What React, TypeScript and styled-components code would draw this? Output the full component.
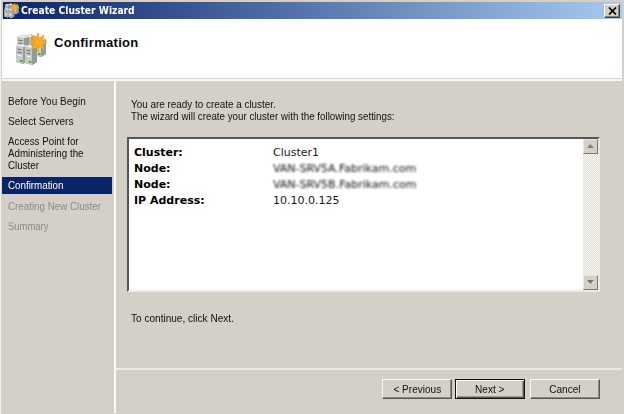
import React from "react";
import styled, { createGlobalStyle } from "styled-components";

const Global = createGlobalStyle`
  *, *::before, *::after { box-sizing: border-box; }
  body { margin: 0; background: #d4d0c8; overflow: hidden; }
`;

const Window = styled.main`
  width: 624px;
  height: 414px;
  display: flex;
  flex-direction: column;
  background: #d4d0c8;
  border-left: 1px solid #f4f3f0;
  padding: 2px 2px 1px 1px;
  font: 11.5px/12px "Liberation Sans", Arial, sans-serif;
  color: #101010;
`;

const TitleBar = styled.header`
  height: 17px;
  flex: none;
  display: flex;
  align-items: center;
  margin-left: 1px;
  padding: 0 2px 0 1px;
  background: linear-gradient(90deg, #0a246a, #a6caf0);
`;

const Scaled = styled.span<{ $x?: number }>`
  display: block;
  width: max-content;
  white-space: pre;
  transform: scaleX(${(p) => p.$x ?? 0.875});
  transform-origin: left center;
`;

const Title = styled(Scaled)`
  margin-left: 2px;
  font: bold 11px/16px "DejaVu Sans", Verdana, sans-serif;
  color: #fff;
`;

const CloseButton = styled.button`
  width: 16px;
  height: 14px;
  margin-left: auto;
  padding: 0;
  display: flex;
  align-items: center;
  justify-content: center;
  background: #d4d0c8;
  border: 1px solid;
  border-color: #fff #404040 #404040 #fff;
  box-shadow: inset -1px -1px #808080;
`;

const Banner = styled.section`
  height: 62px;
  flex: none;
  display: flex;
  padding: 14px 0 0 13px;
  background: linear-gradient(#fff 59px, #d8d5ce 59px 60px, #f8f7f5 60px);
`;

const Heading = styled.h1`
  margin: 1px 0 0 7px;
  font: bold 13px/17px "Liberation Sans", Arial, sans-serif;
  letter-spacing: 0.31px;
  color: #080808;
`;

const Body = styled.div`
  flex: 1;
  display: flex;
  min-height: 0;
`;

const Sidebar = styled.nav`
  width: 114px;
  flex: none;
  border-right: 2px solid #fbfaf8;
  padding-top: 12px;
  display: flex;
  flex-direction: column;
  gap: 3px;
`;

const Step = styled.div<{ $state?: "active" | "disabled" }>`
  width: 110px;
  min-height: 17px;
  padding: ${(p) => (p.$state === "disabled" ? "3px 0 2px 6px" : "2px 0 3px 6px")};
  color: ${(p) => (p.$state === "active" ? "#fff" : p.$state === "disabled" ? "#8c8984" : "#101010")};
  background: ${(p) => (p.$state === "active" ? "#0a246a" : "transparent")};
`;

const Main = styled.div`
  flex: 1;
  display: flex;
  flex-direction: column;
`;

const Intro = styled.div`
  height: 56px;
  padding: 17px 0 0 15px;
`;

const Results = styled.section`
  width: 473px;
  height: 155px;
  margin-left: 11px;
  display: flex;
  background: #fff;
  border: 2px solid;
  border-color: #555 #eceae4 #eceae4 #555;
`;

const Grid = styled.dl`
  flex: 1;
  margin: 0;
  padding: 6px 0 0 5px;
  display: grid;
  grid-template-columns: 139px 1fr;
  grid-auto-rows: 16px;
  font: 11px/16px "DejaVu Sans", Verdana, sans-serif;
  color: #181818;
`;

const Term = styled.dt`
  font-weight: bold;
  color: #000;
`;

const Value = styled.dd<{ $hidden?: boolean }>`
  margin: 0;
  ${(p) => p.$hidden && "filter: blur(1.2px); color: #111;"}
`;

const Scrollbar = styled.div`
  width: 15px;
  display: flex;
  flex-direction: column;
  justify-content: space-between;
  background: repeating-conic-gradient(#e2dfd9 0 25%, #f8f7f5 0 50%) 0 0 / 2px 2px;
`;

const ScrollButton = styled.button`
  width: 15px;
  height: 15px;
  padding: 0;
  display: flex;
  align-items: center;
  justify-content: center;
  background: #d4d0c8;
  border: 1px solid;
  border-color: #e8e5df #777 #777 #e8e5df;
`;

const Hint = styled.div`
  height: 76px;
  padding: 20px 0 0 15px;
`;

const Footer = styled.footer`
  flex: 1;
  display: flex;
  align-items: flex-start;
  border-top: 2px solid #eceae5;
  padding: 9px 0 0 266px;
`;

const Button = styled.button<{ $primary?: boolean }>`
  width: 70px;
  height: 20px;
  padding: 0;
  display: flex;
  align-items: center;
  justify-content: center;
  font: inherit;
  color: #101010;
  background: #d4d0c8;
  border: 1px solid;
  border-color: ${(p) => (p.$primary ? "#111" : "#f8f7f4 #555 #555 #f8f7f4")};
  box-shadow: ${(p) =>
    p.$primary ? "inset 1px 1px #fff, inset -1px -1px #555, inset -2px -2px #99958f" : "inset -1px -1px #8c8984"};
  margin-left: ${(p) => (p.$primary ? 3 : 0)}px;
  &:last-child { margin-left: 5px; }
  & > span { transform-origin: center; }
`;

const towers = [
  [9, 1],
  [2, 2],
  [19, 4],
  [1, 11],
  [10, 12],
];

function ClusterIcon({ size }: { size: number }) {
  return (
    <svg width={size} height={size} viewBox="0 0 32 32" aria-hidden="true">
      {towers.map(([x, y]) => (
        <g key={`${x}-${y}`} transform={`translate(${x} ${y})`}>
          <path d="M0 2 4 0 10 1 12 3V17L7 20 0 18Z" fill="#a5a7a6" />
          <path d="M0 2 7 3V20L0 18Z" fill="#c6c9c7" />
          <path d="M7 3 12 2V17L7 20Z" fill="#969a99" />
          <path d="M0 2 4 0 12 2 7 3Z" fill="#eceeeb" />
          <path d="M1.5 5 5.5 6M1.5 8 5.5 9" stroke="#656969" strokeWidth="1.1" />
          <path d="M1.5 11 5.5 12" stroke="#f9faf9" />
          <path d="M4 16H6.5V18H4Z" fill="#48b51c" />
        </g>
      ))}
      <path
        d="M23 0 24.4 5.5 29 2 27 7 32 9 27 11 29 16 24.5 12.6 23 18 21.2 12.8 16.5 16 18.5 11 14 9 18.7 7 16.5 2 21.2 5.2Z"
        fill="#f6a51b"
        stroke="#f6a51b"
        strokeWidth="1"
      />
      <circle cx="23" cy="9" r="3" fill="#fbae29" />
    </svg>
  );
}

export default function App() {
  return (
    <>
      <Global />
      <Window>
        <TitleBar>
          <ClusterIcon size={15} />
          <Title $x={0.835}>Create Cluster Wizard</Title>
          <CloseButton aria-label="Close">
            <svg width="9" height="8" viewBox="0 0 9 8">
              <path d="M1 .5 8 7.5M8 .5 1 7.5" stroke="#000" strokeWidth="1.7" />
            </svg>
          </CloseButton>
        </TitleBar>
        <Banner>
          <ClusterIcon size={32} />
          <Heading>Confirmation</Heading>
        </Banner>
        <Body>
          <Sidebar>
            <Step><Scaled>Before You Begin</Scaled></Step>
            <Step><Scaled>Select Servers</Scaled></Step>
            <Step><Scaled $x={0.85}>{"Access Point for\nAdministering the\nCluster"}</Scaled></Step>
            <Step $state="active"><Scaled $x={0.85}>Confirmation</Scaled></Step>
            <Step $state="disabled"><Scaled $x={0.85}>Creating New Cluster</Scaled></Step>
            <Step $state="disabled"><Scaled $x={0.82}>Summary</Scaled></Step>
          </Sidebar>
          <Main>
            <Intro>
              <Scaled $x={0.86}>You are ready to create a cluster.</Scaled>
              <Scaled $x={0.85}>The wizard will create your cluster with the following settings:</Scaled>
            </Intro>
            <Results>
              <Grid>
                <Term>Cluster:</Term><Value>Cluster1</Value>
                <Term>Node:</Term><Value $hidden>VAN-SRV5A.Fabrikam.com</Value>
                <Term>Node:</Term><Value $hidden>VAN-SRV5B.Fabrikam.com</Value>
                <Term>IP Address:</Term><Value>10.10.0.125</Value>
              </Grid>
              <Scrollbar>
                <ScrollButton aria-label="Scroll up">
                  <svg width="7" height="5" viewBox="0 0 7 5"><path d="M0 4 3.5 0 7 4Z" fill="#85827c" /></svg>
                </ScrollButton>
                <ScrollButton aria-label="Scroll down">
                  <svg width="7" height="5" viewBox="0 0 7 5"><path d="M1 5 4.5 1 8 1Z" fill="#fff" /><path d="M0 0H7L3.5 4Z" fill="#77746e" /></svg>
                </ScrollButton>
              </Scrollbar>
            </Results>
            <Hint><Scaled>To continue, click Next.</Scaled></Hint>
            <Footer>
              <Button><Scaled>&lt; Previous</Scaled></Button>
              <Button $primary><Scaled>Next &gt;</Scaled></Button>
              <Button><Scaled>Cancel</Scaled></Button>
            </Footer>
          </Main>
        </Body>
      </Window>
    </>
  );
}
